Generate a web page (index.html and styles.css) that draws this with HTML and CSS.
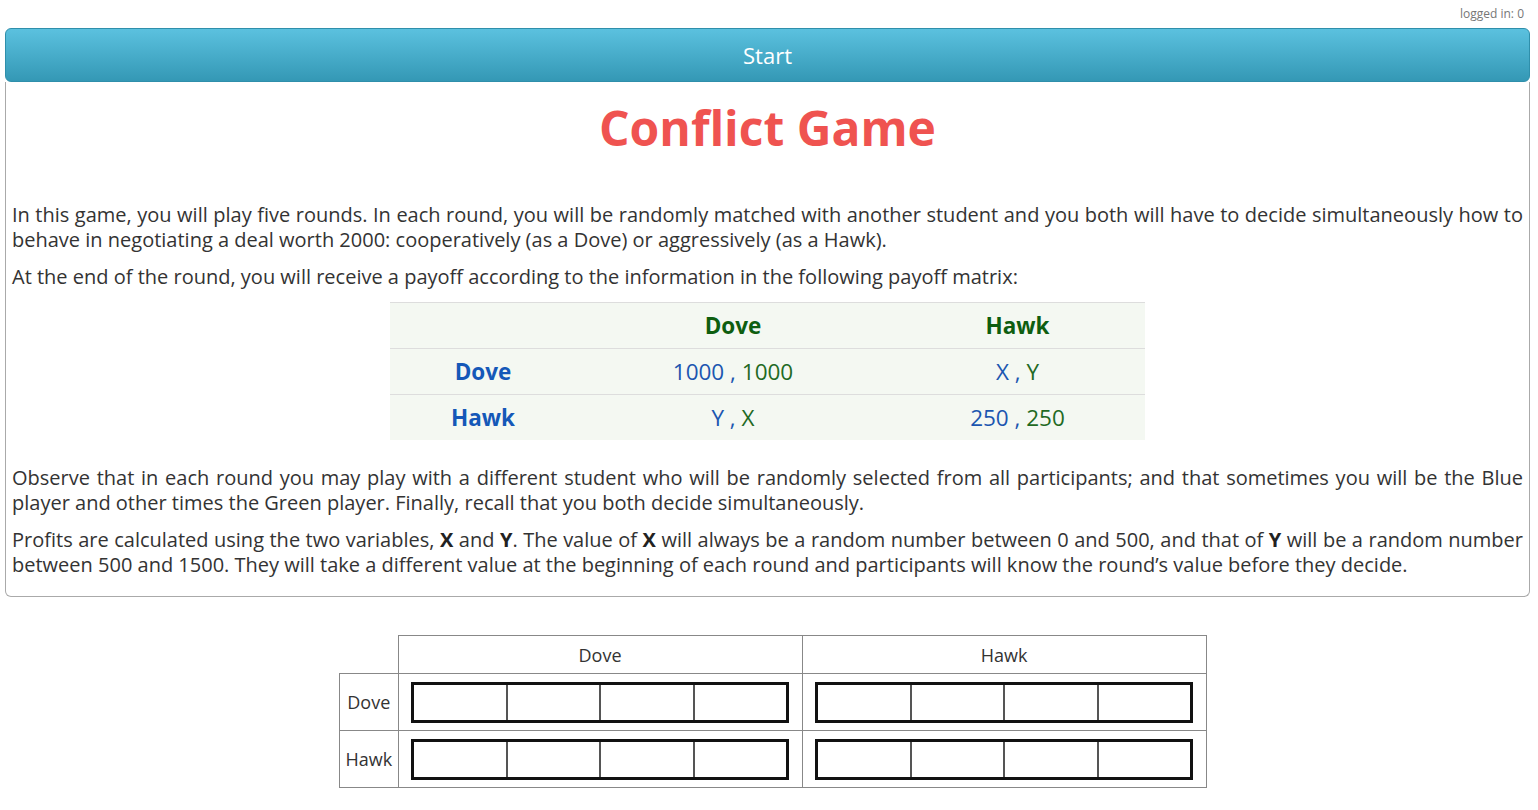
FILE: index.html
```html
<!DOCTYPE html>
<html>
<head>
<meta charset="utf-8">
<link rel="stylesheet" href="styles.css">
</head>
<body>
<div class="login">logged in: 0</div>
<div class="start">Start</div>
<div class="panel">
  <h1 class="title">Conflict Game</h1>
  <p>In this game, you will play five rounds. In each round, you will be randomly matched with another student and you both will have to decide simultaneously how to behave in negotiating a deal worth 2000: cooperatively (as a Dove) or aggressively (as a Hawk).</p>
  <p>At the end of the round, you will receive a payoff according to the information in the following payoff matrix:</p>
  <table class="payoff">
    <tr><th class="c0"></th><th class="c1">Dove</th><th class="c2">Hawk</th></tr>
    <tr><td class="rl">Dove</td><td><span class="b">1000 ,</span> <span class="g">1000</span></td><td><span class="b">X ,</span> <span class="g">Y</span></td></tr>
    <tr><td class="rl">Hawk</td><td><span class="b">Y ,</span> <span class="g">X</span></td><td><span class="b">250 ,</span> <span class="g">250</span></td></tr>
  </table>
  <p>Observe that in each round you may play with a different student who will be randomly selected from all participants; and that sometimes you will be the Blue player and other times the Green player. Finally, recall that you both decide simultaneously.</p>
  <p>Profits are calculated using the two variables, <b>X</b> and <b>Y</b>. The value of <b>X</b> will always be a random number between 0 and 500, and that of <b>Y</b> will be a random number between 500 and 1500. They will take a different value at the beginning of each round and participants will know the round’s value before they decide.</p>
</div>
<table class="grid">
  <tr><td class="empty"></td><td class="hd">Dove</td><td class="hd">Hawk</td></tr>
  <tr><td class="lab">Dove</td>
    <td class="cell"><div class="boxes"><span></span><span></span><span></span><span></span></div></td>
    <td class="cell"><div class="boxes"><span></span><span></span><span></span><span></span></div></td></tr>
  <tr><td class="lab">Hawk</td>
    <td class="cell"><div class="boxes"><span></span><span></span><span></span><span></span></div></td>
    <td class="cell"><div class="boxes"><span></span><span></span><span></span><span></span></div></td></tr>
</table>
</body>
</html>
```
FILE: styles.css
```css
html, body { margin: 0; padding: 0; background: #fff; }
body {
  font-family: "Open Sans", "Liberation Sans", sans-serif;
  color: #333;
  padding: 0 8px 0 5px;
}
.login {
  height: 28px;
  text-align: right;
  font-size: 12px;
  line-height: 28px;
  color: #777;
  padding-right: 6px;
}
.start {
  height: 52px;
  line-height: 52px;
  text-align: center;
  color: #fff;
  font-size: 22px;
  border: 1px solid #2f8fab;
  border-radius: 6px;
  background: linear-gradient(to bottom, #5bc1df, #3498b5);
}
.panel {
  border: 1px solid #aaa;
  border-top: none;
  border-radius: 0 0 6px 6px;
  padding: 0 6px 7px 6px;
}
.title {
  margin: 0;
  padding-top: 16px;
  line-height: 60px;
  height: 60px;
  margin-bottom: 44px;
  text-align: center;
  color: #ef5350;
  font-size: 48px;
  font-weight: 700;
}
.panel p {
  margin: 12px 0;
  font-size: 20px;
  line-height: 25px;
  text-align: justify;
}
.panel p b { color: #222; }
.payoff {
  border-collapse: collapse;
  margin: 13px auto 25px auto;
  background: #f4f8f2;
  font-size: 22.5px;
}
.payoff th, .payoff td {
  height: 45px;
  padding: 0;
  text-align: center;
  border-top: 1px solid #ddd;
}
.payoff .c0 { width: 186px; }
.payoff .c1 { width: 314px; }
.payoff .c2 { width: 255px; }
.payoff th { color: #0e5e10; font-weight: 700; }
.payoff .rl { color: #1558b8; font-weight: 700; }
.payoff .b { color: #1b56b0; }
.payoff .g { color: #1f6a24; }
.grid {
  border-collapse: collapse;
  margin: 38px 0 0 334px;
  font-size: 18px;
  color: #333;
}
.grid td { border: 1px solid #888; padding: 0; text-align: center; }
.grid td.empty { border: none; border-right: 1px solid #888; border-bottom: 1px solid #888; width: 58px; }
.grid td.hd { height: 37px; width: 403px; }
.grid td.lab { height: 56px; }
.boxes {
  display: flex;
  width: 372px;
  height: 35px;
  margin: 0 auto;
  border: 3px solid #111;
}
.boxes span { flex: 1; border-left: 2px solid #555; }
.boxes span:first-child { border-left: none; }
```
